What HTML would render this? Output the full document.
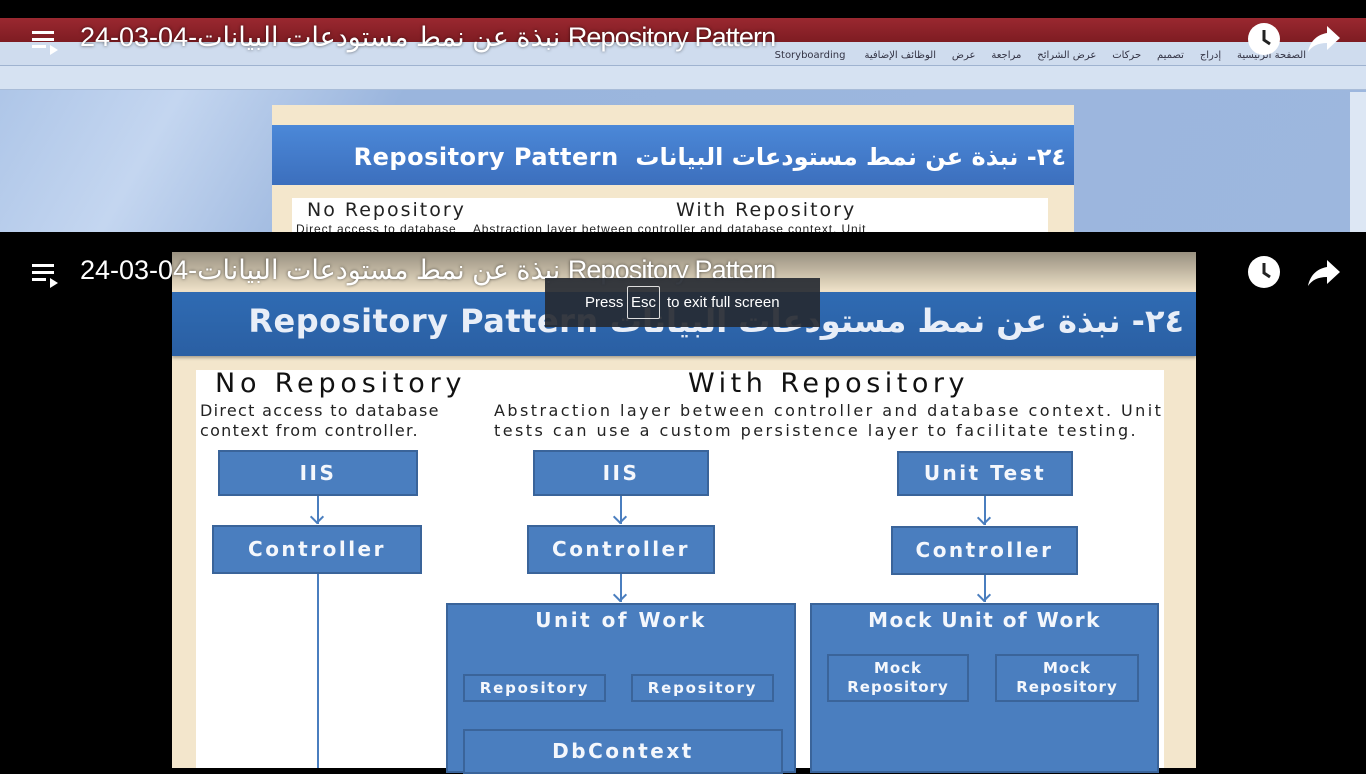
<!DOCTYPE html>
<html><head><meta charset="utf-8"><style>
*{margin:0;padding:0;box-sizing:border-box}
body{width:1366px;height:768px;overflow:hidden;background:#000;position:relative;font-family:"Liberation Sans","DejaVu Sans",sans-serif}
.a{position:absolute}
.box{position:absolute;background:#4a7ebf;border:2px solid #3a649a;color:#f4f7fc;text-align:center;font-family:"DejaVu Sans","Liberation Sans",sans-serif;font-weight:bold;overflow:hidden}
.t{font-size:20px;letter-spacing:2.5px}
.s{font-size:15px;letter-spacing:1.8px}
.ttl{position:absolute;left:80px;color:#fff;font-size:27px;white-space:nowrap;text-shadow:0 0 3px rgba(0,0,0,.6);letter-spacing:-0.9px}
.vl{position:absolute;width:2px;background:#4a7ebf}
.ar{position:absolute;width:10px;height:10px;border-right:2px solid #4a7ebf;border-bottom:2px solid #4a7ebf;transform:rotate(45deg)}
</style></head><body>
<div class="a" style="left:0;top:18px;width:1366px;height:214px;background:linear-gradient(120deg,#a9c2e6 0%,#c4d6f0 15%,#9ab5dd 30%,#9db7de 100%)"></div>
<div class="a" style="left:0;top:18px;width:1366px;height:24px;background:linear-gradient(#9a2830,#7e1c22)"></div>
<div class="a" style="left:0;top:42px;width:1366px;height:24px;background:#cfdcee;border-bottom:1px solid #9fb3d0"></div>
<div class="a" style="left:0;top:66px;width:1366px;height:24px;background:#d6e2f2;border-bottom:1px solid #a9bcd8"></div>
<div class="a" dir="rtl" style="right:60px;top:50px;font-size:10px;color:#334;white-space:nowrap;font-family:'DejaVu Sans',sans-serif">الصفحة الرئيسية &nbsp;&nbsp;&nbsp; إدراج &nbsp;&nbsp;&nbsp; تصميم &nbsp;&nbsp;&nbsp; حركات &nbsp;&nbsp;&nbsp; عرض الشرائح &nbsp;&nbsp;&nbsp; مراجعة &nbsp;&nbsp;&nbsp; عرض &nbsp;&nbsp;&nbsp; الوظائف الإضافية &nbsp;&nbsp;&nbsp;&nbsp; Storyboarding</div>
<div class="a" style="left:1350px;top:92px;width:16px;height:140px;background:#dde7f4"></div>
<div class="a" style="left:272px;top:105px;width:802px;height:127px;background:#f4e7cc;overflow:hidden">
 <div class="a" style="left:0;top:20px;width:802px;height:60px;background:linear-gradient(#4b88d8,#3c6fbd);"></div>
 <div class="a" dir="rtl" style="right:8px;top:38px;color:#fff;font-size:24px;font-weight:bold;font-family:'DejaVu Sans',sans-serif;white-space:nowrap;letter-spacing:.5px">٢٤- نبذة عن نمط مستودعات البيانات &nbsp;Repository Pattern</div>
 <div class="a" style="left:20px;top:93px;width:756px;height:40px;background:#fff"></div>
 <div class="a" style="left:35px;top:94px;font-size:19px;color:#222;font-family:'DejaVu Sans',sans-serif;letter-spacing:2px">No Repository</div>
 <div class="a" style="left:404px;top:94px;font-size:19px;color:#222;font-family:'DejaVu Sans',sans-serif;letter-spacing:2px">With Repository</div>
 <div class="a" style="left:24px;top:117px;font-size:12px;color:#222;white-space:nowrap;letter-spacing:.9px">Direct access to database &nbsp;&nbsp; Abstraction layer between controller and database context. Unit</div>
</div>

<div class="a" style="left:172px;top:252px;width:1024px;height:516px;background:#f3e6cc"></div>
<div class="a" style="left:172px;top:292px;width:1024px;height:64px;background:linear-gradient(#2f6bb3,#2a5fa3);box-shadow:0 2px 3px rgba(0,0,0,.3)"></div>
<div class="a" dir="rtl" style="right:182px;top:302px;color:#e8eef8;font-size:32px;font-weight:bold;font-family:'DejaVu Sans',sans-serif;white-space:nowrap;letter-spacing:.5px">٢٤- نبذة عن نمط مستودعات البيانات Repository Pattern</div>
<div class="a" style="left:196px;top:370px;width:968px;height:398px;background:#fff"></div>
<div class="a" style="left:215px;top:368px;font-size:27px;color:#111;font-family:'DejaVu Sans',sans-serif;letter-spacing:4.8px">No Repository</div>
<div class="a" style="left:688px;top:368px;font-size:27px;color:#111;font-family:'DejaVu Sans',sans-serif;letter-spacing:4.5px">With Repository</div>
<div class="a" style="left:200px;top:401px;font-size:16px;line-height:20px;color:#222;font-family:'DejaVu Sans',sans-serif;letter-spacing:1.3px">Direct access to database<br>context from controller.</div>
<div class="a" style="left:494px;top:401px;font-size:16px;line-height:20px;color:#222;font-family:'DejaVu Sans',sans-serif;white-space:nowrap;letter-spacing:2.45px">Abstraction layer between controller and database context. Unit<br>tests can use a custom persistence layer to facilitate testing.</div>

<div class="box t" style="left:218px;top:450px;width:200px;height:46px;line-height:42px">IIS</div>
<div class="box t" style="left:212px;top:525px;width:210px;height:49px;line-height:45px">Controller</div>
<div class="box t" style="left:533px;top:450px;width:176px;height:46px;line-height:42px">IIS</div>
<div class="box t" style="left:527px;top:525px;width:188px;height:49px;line-height:45px">Controller</div>
<div class="box t" style="left:897px;top:451px;width:176px;height:45px;line-height:41px">Unit Test</div>
<div class="box t" style="left:891px;top:526px;width:187px;height:49px;line-height:45px">Controller</div>
<div class="box t" style="left:446px;top:603px;width:350px;height:170px;line-height:30px">Unit of Work</div>
<div class="box t" style="left:810px;top:603px;width:349px;height:170px;line-height:30px;letter-spacing:1.5px">Mock Unit of Work</div>
<div class="box s" style="left:463px;top:674px;width:143px;height:28px;line-height:24px">Repository</div>
<div class="box s" style="left:631px;top:674px;width:143px;height:28px;line-height:24px">Repository</div>
<div class="box t" style="left:463px;top:729px;width:320px;height:45px;line-height:40px">DbContext</div>
<div class="box s" style="left:827px;top:654px;width:142px;height:48px;line-height:19px;padding-top:3px;letter-spacing:1px">Mock<br>Repository</div>
<div class="box s" style="left:995px;top:654px;width:144px;height:48px;line-height:19px;padding-top:3px;letter-spacing:1px">Mock<br>Repository</div>

<div class="vl" style="left:317px;top:496px;height:28px"></div><div class="ar" style="left:312px;top:512px"></div>
<div class="vl" style="left:317px;top:574px;height:194px"></div>
<div class="vl" style="left:620px;top:496px;height:28px"></div><div class="ar" style="left:615px;top:512px"></div>
<div class="vl" style="left:620px;top:574px;height:28px"></div><div class="ar" style="left:615px;top:590px"></div>
<div class="vl" style="left:984px;top:496px;height:29px"></div><div class="ar" style="left:979px;top:513px"></div>
<div class="vl" style="left:984px;top:575px;height:27px"></div><div class="ar" style="left:979px;top:590px"></div>

<div class="a" style="left:0;top:233px;width:1366px;height:60px;background:linear-gradient(rgba(0,0,0,.55),rgba(0,0,0,0))"></div>
<div class="ttl" style="top:22px"><span>24-03-04-</span><span dir="rtl" style="unicode-bidi:isolate">نبذة عن نمط مستودعات البيانات</span> Repository Pattern</div>
<div class="ttl" style="top:255px"><span>24-03-04-</span><span dir="rtl" style="unicode-bidi:isolate">نبذة عن نمط مستودعات البيانات</span> Repository Pattern</div>

<svg class="a" style="left:30px;top:28px" width="32" height="30" viewBox="0 0 32 30"><g fill="#fff"><rect x="2" y="3" width="22" height="3"/><rect x="2" y="10" width="22" height="3"/><rect x="2" y="17" width="14" height="3"/><path d="M20 17 L28 22 L20 27Z"/></g></svg>
<svg class="a" style="left:30px;top:261px" width="32" height="30" viewBox="0 0 32 30"><g fill="#fff"><rect x="2" y="3" width="22" height="3"/><rect x="2" y="10" width="22" height="3"/><rect x="2" y="17" width="14" height="3"/><path d="M20 17 L28 22 L20 27Z"/></g></svg>
<svg class="a" style="left:1247px;top:22px" width="34" height="34" viewBox="0 0 34 34"><circle cx="17" cy="17" r="16" fill="#fff"/><path d="M17 8 V18 L23 22" stroke="#222" stroke-width="3" fill="none"/></svg>
<svg class="a" style="left:1247px;top:255px" width="34" height="34" viewBox="0 0 34 34"><circle cx="17" cy="17" r="16" fill="#fff"/><path d="M17 8 V18 L23 22" stroke="#222" stroke-width="3" fill="none"/></svg>
<svg class="a" style="left:1306px;top:24px" width="36" height="30" viewBox="0 0 36 30"><path d="M21 2 L34 14 L21 26 V19 C12 19 6 22 2 28 C4 18 10 11 21 9Z" fill="#fff"/></svg>
<svg class="a" style="left:1306px;top:258px" width="36" height="30" viewBox="0 0 36 30"><path d="M21 2 L34 14 L21 26 V19 C12 19 6 22 2 28 C4 18 10 11 21 9Z" fill="#fff"/></svg>

<div class="a" style="left:545px;top:278px;width:275px;height:49px;background:rgba(38,42,50,.92)"></div>
<div class="a" style="left:585px;top:294px;color:#fff;font-size:15px;white-space:nowrap">Press</div>
<div class="a" style="left:627px;top:286px;width:33px;height:33px;border:1px solid #ddd;border-radius:2px;color:#fff;font-size:15px;line-height:31px;text-align:center">Esc</div>
<div class="a" style="left:667px;top:294px;color:#fff;font-size:15px;white-space:nowrap">to exit full screen</div>
</body></html>
